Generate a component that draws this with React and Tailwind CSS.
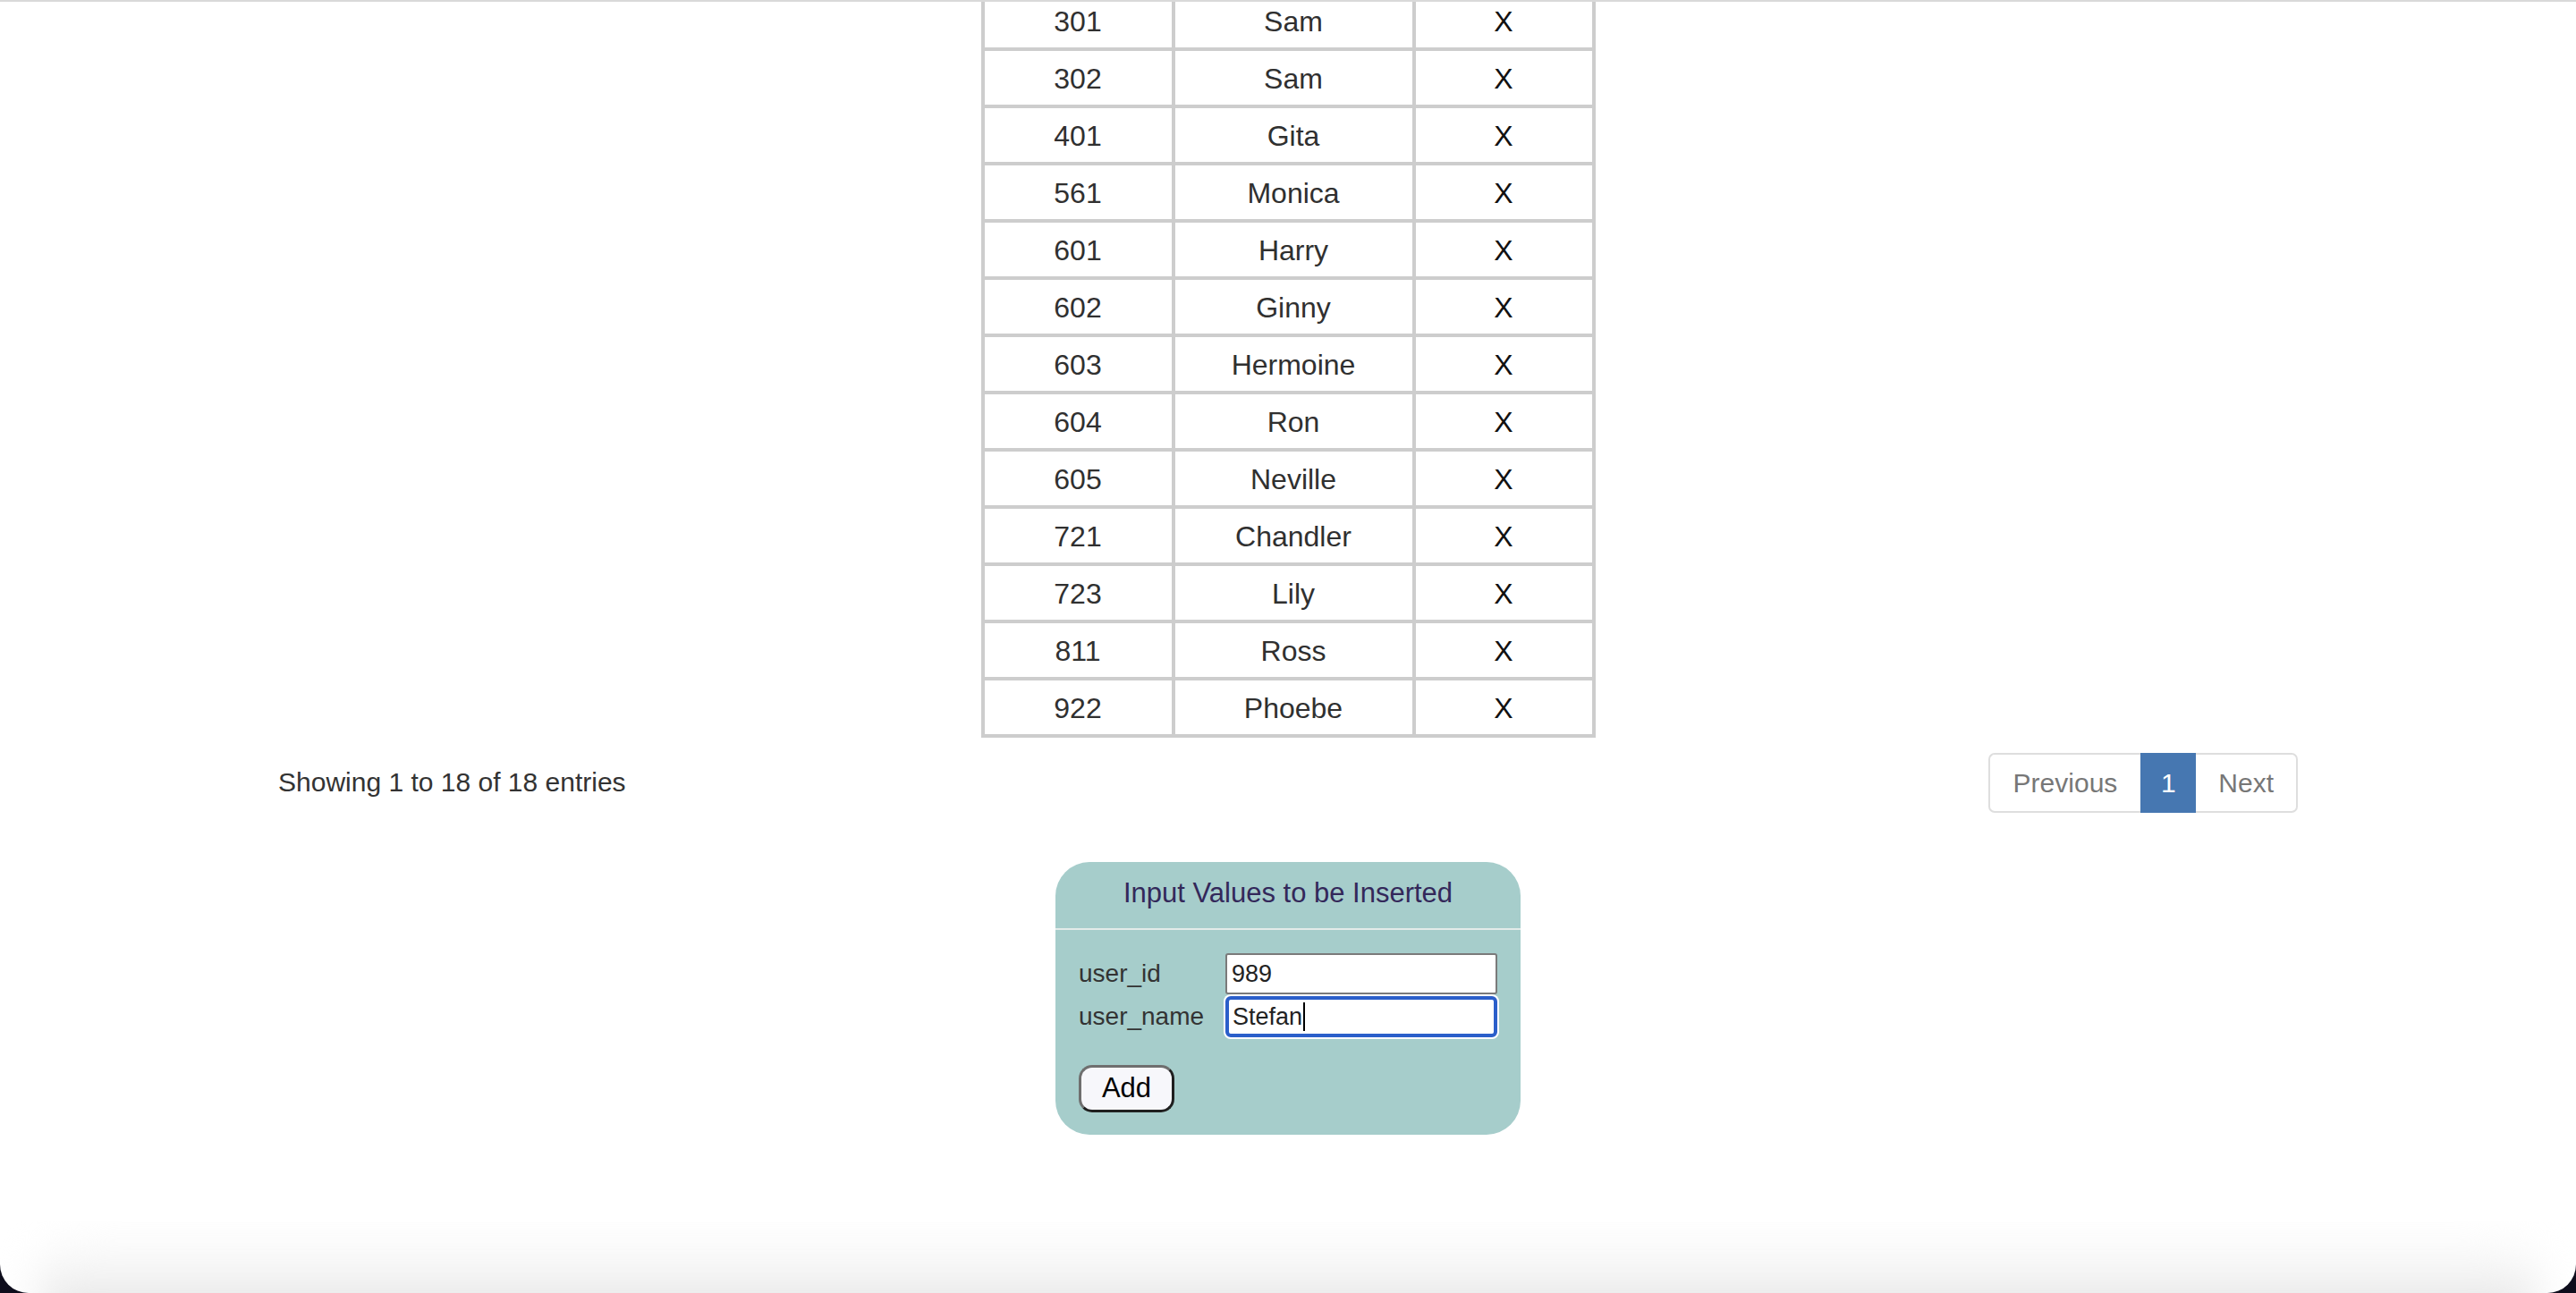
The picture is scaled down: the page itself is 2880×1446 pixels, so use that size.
import React from 'react';

const rows = [
  ['301', 'Sam'],
  ['302', 'Sam'],
  ['401', 'Gita'],
  ['561', 'Monica'],
  ['601', 'Harry'],
  ['602', 'Ginny'],
  ['603', 'Hermoine'],
  ['604', 'Ron'],
  ['605', 'Neville'],
  ['721', 'Chandler'],
  ['723', 'Lily'],
  ['811', 'Ross'],
  ['922', 'Phoebe'],
];

function UsersTable() {
  return (
    <div className="flex justify-center overflow-hidden">
      <div className="-mt-[13px] grid grid-cols-[209px_265px_197px] gap-[4px] p-[4px] bg-[#cdcdcd] text-[32px] text-[#303030]">
        {rows.map(([id, name]) => (
          <React.Fragment key={id}>
            <div className="h-[60px] pt-[2px] bg-white flex items-center justify-center">{id}</div>
            <div className="h-[60px] pt-[2px] bg-white flex items-center justify-center">{name}</div>
            <div className="h-[60px] pt-[2px] bg-white flex items-center justify-center text-[#111]">X</div>
          </React.Fragment>
        ))}
      </div>
    </div>
  );
}

function TableFooter() {
  return (
    <div className="mt-[17px] mx-auto w-[2258px] flex items-center justify-between">
      <div className="text-[30px] text-[#333] pb-[3px]">Showing 1 to 18 of 18 entries</div>
      <div className="flex h-[67px] text-[30px] text-[#777]">
        <div className="flex items-center px-[26px] border-2 border-r-0 border-[#dedede] rounded-l-[7px] bg-white">Previous</div>
        <div className="flex items-center justify-center w-[62px] bg-[#4677b1] text-white">1</div>
        <div className="flex items-center px-[25px] border-2 border-l-0 border-[#dedede] rounded-r-[7px] bg-white">Next</div>
      </div>
    </div>
  );
}

function InsertForm() {
  return (
    <div className="mt-[55px] flex justify-center">
      <div className="w-[520px] h-[305px] rounded-[38px] bg-[#a6cdcb]">
        <div className="h-[74px] pb-[3px] flex items-center justify-center text-[31px] text-[#33285a]">
          Input Values to be Inserted
        </div>
        <div className="h-[2px] bg-[#e3ebe9]" />
        <div className="px-[26px] pt-[26px]">
          <div className="grid grid-cols-[164px_304px] items-center gap-y-[2px] text-[28px] text-[#333]">
            <div>user_id</div>
            <div className="h-[46px] bg-white border-2 border-[#7a7a7a] rounded-[3px] flex items-center pl-[5px] text-[27px] text-[#222]">989</div>
            <div>user_name</div>
            <div className="h-[46px] bg-white border-[4px] border-[#2b5fca] rounded-[6px] shadow-[0_0_0_2px_#ffffff] flex items-center pl-[4px] text-[27px] text-[#222]">
              Stefan
              <span className="inline-block w-[2px] h-[32px] bg-black ml-[1px]" />
            </div>
          </div>
          <button className="mt-[31px] w-[107px] h-[53px] rounded-[15px] bg-[#f7f7fb] border-[3px] border-t-[#6f6f6f] border-l-[#6f6f6f] border-r-[#1f1f1f] border-b-[#1f1f1f] text-[31px] text-black flex items-center justify-center">
            Add
          </button>
        </div>
      </div>
    </div>
  );
}

export default function App() {
  return (
    <div className="h-[1446px] bg-[#0e0d1c] overflow-hidden font-['Liberation_Sans',sans-serif]">
      <div className="h-full bg-white rounded-b-[32px] overflow-hidden flex flex-col">
        <div className="h-[2px] bg-[#d9d9d9] relative z-10" />
        <UsersTable />
        <TableFooter />
        <InsertForm />
        <div className="mt-auto h-[80px] overflow-hidden px-[40px]">
          <div className="h-[120px] mt-[10px] rounded-[60px] bg-gradient-to-b from-white via-[#f2f2f2] to-[#d8d8d8] blur-[22px]" />
        </div>
      </div>
    </div>
  );
}
